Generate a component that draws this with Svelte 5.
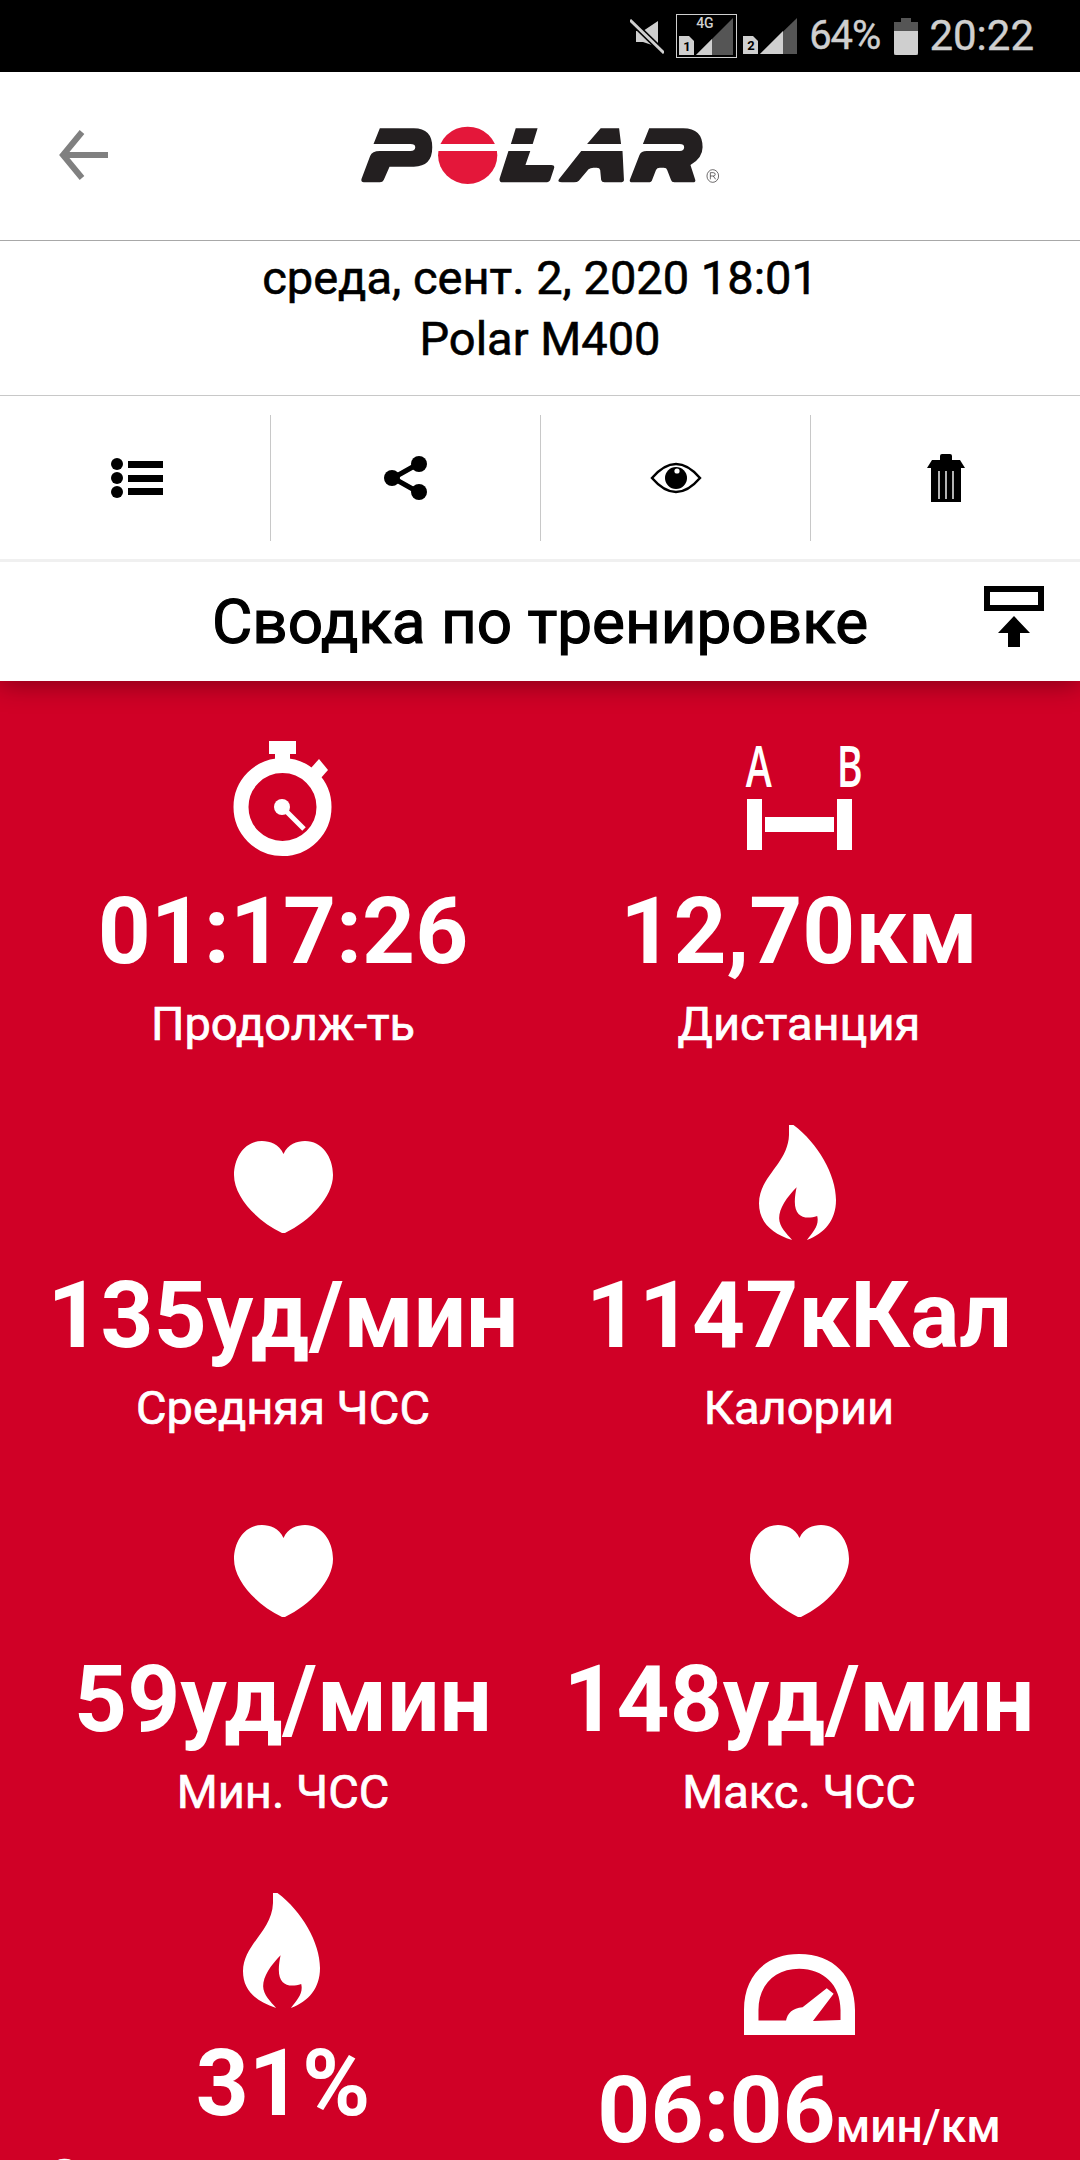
<script>
	const rows = [
		[
			{ icon: 'watch', value: '01:17:26', unit: '', label: 'Продолж-ть' },
			{ icon: 'dist', value: '12,70', unit: 'км', label: 'Дистанция' }
		],
		[
			{ icon: 'heart', value: '135', unit: 'уд/мин', label: 'Средняя ЧСС' },
			{ icon: 'flame', value: '1147', unit: 'кКал', label: 'Калории' }
		],
		[
			{ icon: 'heart', value: '59', unit: 'уд/мин', label: 'Мин. ЧСС' },
			{ icon: 'heart', value: '148', unit: 'уд/мин', label: 'Макс. ЧСС' }
		],
		[
			{ icon: 'flame', value: '31', unit: '%', label: 'Сжигание жира, ккал' },
			{ icon: 'speed', value: '06:06', unit: 'мин/км', small: true, label: 'Темп' }
		]
	];
</script>

<div class="screen">
	<div class="status">
		<svg class="st-mute" viewBox="0 0 34 35" width="34" height="35">
			<path d="M6 12h7L28 2v26L13 23H6z" fill="#cfcfcf" />
			<path d="M0 1l34 33" stroke="#000" stroke-width="6" />
			<path d="M0 1l34 33" stroke="#cfcfcf" stroke-width="3" />
		</svg>
		<div class="sim-box">
			<span class="net">4G</span>
			<svg viewBox="0 0 59 42" width="59" height="42">
				<path d="M2 21h10l5 5v14H2z" fill="#cfcfcf" />
				<path d="M19 40L56 3v37z" fill="#555" />
				<path d="M19 40l16-16v16z" fill="#cfcfcf" />
			</svg>
			<span class="sim-num one">1</span>
		</div>
		<div class="sim-two">
			<svg viewBox="0 0 54 37" width="54" height="37">
				<path d="M0 18h10l5 5v13H0z" fill="#cfcfcf" />
				<path d="M17 36L54 0v36z" fill="#555" />
				<path d="M17 36l23-23v23z" fill="#cfcfcf" />
			</svg>
			<span class="sim-num two">2</span>
		</div>
		<span class="pct">64%</span>
		<svg class="st-batt" viewBox="0 0 24 37" width="24" height="37">
			<path d="M7 0h10v4h7v33H0V4h7z" fill="#555" />
			<path d="M0 13h24v22a2 2 0 0 1-2 2H2a2 2 0 0 1-2-2z" fill="#cfcfcf" />
		</svg>
		<span class="clock">20:22</span>
	</div>

	<header class="topbar">
		<svg class="back" viewBox="0 0 52 52" width="52" height="52">
			<path d="M50 26H6M24 3L5 26l19 23" fill="none" stroke="#808080" stroke-width="6" />
		</svg>
		<svg class="logo" viewBox="740 165 750 180" width="364" height="60" preserveAspectRatio="none">
			<g fill="#231f20">
				<path d="M785 175H855Q893 175 893 232Q893 290 855 290H805L793 330Q791 337 785 337H752Q746 337 747 328L765 258Q769 243 785 243H848Q858 243 858 232Q858 222 848 222H772Z" />
				<path d="M1065 175H1110L1100 222H1055ZM1050 243H1095L1085 285H1138Q1146 285 1144 295L1136 330Q1134 337 1126 337H1038Q1030 337 1032 325Z" />
				<path d="M1240 175H1278L1282 222H1212ZM1200 243H1285L1288 330Q1288 337 1280 337H1248Q1242 337 1241 330L1239 300Q1238 293 1232 293H1225Q1219 293 1215 298L1195 332Q1192 337 1185 337H1160Q1150 337 1154 328Z" />
				<path d="M1340 175H1410Q1450 175 1450 232Q1450 265 1425 285L1435 330Q1436 337 1430 337H1392Q1386 337 1385 330L1377 300Q1376 293 1370 293H1362Q1356 293 1354 300L1346 330Q1345 337 1338 337H1305Q1299 337 1300 330L1320 255Q1323 243 1335 243H1403Q1412 243 1412 232Q1412 222 1403 222H1327Z" />
			</g>
			<ellipse cx="966" cy="256" rx="61" ry="86" fill="#e4173a" />
			<rect x="900" y="222" width="135" height="21" fill="#fff" />
			<ellipse cx="1471" cy="318" rx="12" ry="19" fill="none" stroke="#231f20" stroke-width="1.6" />
			<path d="M1466 328V308H1472Q1476 308 1476 313Q1476 318 1472 318H1466M1472 318L1477 328" fill="none" stroke="#231f20" stroke-width="1.6" />
		</svg>
	</header>

	<section class="when">
		<div>среда, сент. 2, 2020 18:01</div>
		<div>Polar M400</div>
	</section>

	<nav class="tools">
		<div class="tool">
			<svg class="list-icon" viewBox="0 0 52 40" width="52" height="40">
				<circle cx="6" cy="6" r="6" /><circle cx="6" cy="20" r="6" /><circle cx="6" cy="34" r="6" />
				<rect x="17" y="3" width="35" height="7" /><rect x="17" y="17" width="35" height="7" /><rect x="17" y="30" width="35" height="7" />
			</svg>
		</div>
		<div class="tool">
			<svg viewBox="0 0 44 44" width="44" height="44">
				<path d="M34 8L9 22l25 14" fill="none" stroke="#000" stroke-width="5" />
				<circle cx="35" cy="8" r="8" /><circle cx="8" cy="22" r="8" /><circle cx="35" cy="36" r="8" />
			</svg>
		</div>
		<div class="tool">
			<svg viewBox="0 0 52 32" width="52" height="32">
				<path d="M2 16Q14 2 26 2T50 16Q38 30 26 30T2 16Z" fill="none" stroke="#000" stroke-width="2.5" />
				<circle cx="26" cy="16" r="11" />
				<circle cx="27" cy="9" r="2.6" fill="#fff" />
			</svg>
		</div>
		<div class="tool">
			<svg viewBox="0 0 38 48" width="38" height="48">
				<path d="M13 6V2q0-2 2-2h8q2 0 2 2v4h8l5 8H0l5-8z" />
				<path d="M4 14h30v34H4z" />
				<path d="M12 17v28M19 17v28M26 17v28" stroke="#fff" stroke-width="1.4" />
			</svg>
		</div>
	</nav>

	<div class="title-bar">
		<h1>Сводка по тренировке</h1>
		<svg class="pin" viewBox="0 0 60 62" width="60" height="62">
			<rect x="3" y="3" width="54" height="19" fill="none" stroke="#000" stroke-width="6" />
			<path d="M30 30L46 47H36V61H24V47H14z" />
		</svg>
	</div>

	<main class="stats">
		{#each rows as row}
			{#each row as s}
				<div class="stat" class:low={s.icon === 'speed'}>
					<div class="icon">
						{#if s.icon === 'watch'}
							<svg viewBox="0 0 100 115" width="100" height="115">
								<rect x="36" y="0" width="27" height="13" fill="#fff" />
								<rect x="42" y="12" width="15" height="9" fill="#fff" />
								<path d="M78 27l8-9 9 11-8 9z" fill="#fff" />
								<circle cx="49.5" cy="66" r="41.5" fill="none" stroke="#fff" stroke-width="15" />
								<circle cx="49" cy="66" r="8" fill="#fff" />
								<path d="M49 66l22 22" stroke="#fff" stroke-width="5" />
							</svg>
						{:else if s.icon === 'dist'}
							<div class="dist">
								<div class="ab"><span>A</span><span>B</span></div>
								<svg viewBox="0 0 105 51" width="105" height="51">
									<rect x="0" y="0" width="15" height="51" fill="#fff" />
									<rect x="90" y="0" width="15" height="51" fill="#fff" />
									<rect x="18" y="18" width="69" height="15" fill="#fff" />
								</svg>
							</div>
						{:else if s.icon === 'heart'}
							<svg viewBox="0 -16 99 115" width="99" height="115">
								<path d="M49.5 13C54 3 63 0 71 0C88 0 99 16 99 34C99 56 76 80 51 92H48C23 80 0 56 0 34C0 16 11 0 28 0C36 0 45 3 49.5 13Z" fill="#fff" />
							</svg>
						{:else if s.icon === 'flame'}
							<svg class="flame" viewBox="1253 45 172 345" width="77" height="115" preserveAspectRatio="none">
								<path d="M1320 45H1330C1385 100 1425 195 1425 270C1425 330 1400 370 1360 390C1375 365 1388 345 1383 318C1355 330 1333 320 1333 275C1333 260 1335 245 1337 232C1315 262 1298 295 1298 325C1298 350 1315 372 1327 390C1280 370 1253 335 1253 280C1253 200 1318 160 1320 75Z" fill="#fff" />
							</svg>
						{:else}
							<svg viewBox="1080 283 161 242" width="111" height="81" preserveAspectRatio="none">
								<path fill-rule="evenodd" d="M1080 525V450C1080 350 1110 283 1160 283C1210 283 1241 350 1241 450V525ZM1101 482H1141C1143 460 1150 445 1165 442L1200 385L1210 402L1180 483L1220 480V450C1220 375 1195 327 1160 327C1125 327 1101 375 1101 450Z" fill="#fff" />
							</svg>
						{/if}
					</div>
					<div class="value">{s.value}<span class:small={s.small}>{s.unit}</span></div>
					<div class="label">{s.label}</div>
				</div>
			{/each}
		{/each}
	</main>
</div>

<style>
	:global(body) {
		margin: 0;
		background: #d00026;
	}

	.screen {
		width: 1080px;
		height: 2160px;
		overflow: hidden;
		font-family: Roboto, 'Liberation Sans', sans-serif;
		display: flex;
		flex-direction: column;
	}

	.status {
		flex: none;
		height: 72px;
		background: #000;
		display: flex;
		align-items: center;
		justify-content: flex-end;
		padding-right: 46px;
		box-sizing: border-box;
		color: #cfcfcf;
	}

	.sim-box {
		position: relative;
		width: 59px;
		height: 42px;
		border: 1px solid #cfcfcf;
		margin: 0 6px 0 12px;
	}

	.sim-box svg,
	.sim-two svg {
		display: block;
	}

	.sim-two {
		position: relative;
		width: 54px;
		height: 37px;
		margin-right: 12px;
	}

	.net {
		position: absolute;
		left: 19px;
		top: 2px;
		font-size: 14px;
		line-height: 12px;
		font-weight: 500;
	}

	.sim-num {
		position: absolute;
		font-size: 13px;
		font-weight: 700;
		line-height: 14px;
		color: #000;
	}

	.sim-num.one {
		left: 6px;
		top: 25px;
	}

	.sim-num.two {
		left: 4px;
		top: 21px;
	}

	.pct {
		font-size: 40px;
		line-height: 44px;
		letter-spacing: -1px;
		-webkit-text-stroke: 0.4px #cfcfcf;
	}

	.st-batt {
		margin: 0 11px 0 14px;
	}

	.clock {
		font-size: 42px;
		line-height: 44px;
		-webkit-text-stroke: 0.4px #cfcfcf;
	}

	.topbar {
		flex: none;
		height: 168px;
		background: #fff;
		border-bottom: 1px solid #a8a8a8;
		display: flex;
		align-items: center;
		justify-content: center;
		position: relative;
	}

	.back {
		position: absolute;
		left: 58px;
		top: 57px;
	}

	.logo {
		margin-bottom: 2px;
	}

	.when {
		flex: none;
		height: 155px;
		background: #fff;
		border-bottom: 1px solid #c8c8c8;
		text-align: center;
		font-size: 47px;
		line-height: 61px;
		color: #000;
		padding-top: 6px;
		box-sizing: border-box;
		-webkit-text-stroke: 0.6px #000;
	}

	.tools {
		flex: none;
		height: 163px;
		background: #fff;
		border-bottom: 3px solid #f0f0f0;
		display: grid;
		grid-template-columns: 271px 270px 270px 269px;
		align-items: center;
	}

	.tool {
		height: 126px;
		display: flex;
		align-items: center;
		justify-content: center;
		border-right: 1px solid #c8c8c8;
	}

	.tool:last-child {
		border-right: 0;
	}

	.tool svg {
		display: block;
	}

	.list-icon {
		margin-left: 3px;
	}

	.title-bar {
		flex: none;
		height: 119px;
		background: #fff;
		display: flex;
		align-items: center;
		justify-content: center;
		position: relative;
		z-index: 1;
		box-shadow: 0 4px 24px rgba(0, 0, 0, 0.35);
		/* shadow only falls on the red panel, not the toolbar above */
		clip-path: inset(0 0 -48px 0);
	}

	h1 {
		margin: 0;
		font-size: 62px;
		font-weight: 400;
		color: #000;
		-webkit-text-stroke: 1.2px #000;
	}

	.pin {
		position: absolute;
		left: 984px;
		top: 24px;
	}

	.stats {
		flex: 1;
		min-height: 0;
		background: #d00026;
		display: grid;
		grid-template-columns: 516px 516px;
		grid-auto-rows: 384px;
		padding: 60px 0 0 25px;
	}

	.stat {
		display: flex;
		flex-direction: column;
		align-items: center;
		color: #fff;
		white-space: nowrap;
	}

	.stat.low {
		padding-top: 27px;
	}

	.icon {
		height: 115px;
		display: flex;
		align-items: center;
		justify-content: center;
	}

	.icon svg {
		display: block;
	}

	.icon .flame {
		margin-left: -3px;
	}

	.low .icon {
		align-items: flex-end;
	}

	.dist {
		width: 105px;
		display: flex;
		flex-direction: column;
		gap: 9px;
	}

	.ab {
		display: flex;
		justify-content: space-between;
		margin: 0 -5px;
		font-size: 58px;
		font-weight: 600;
		line-height: 42px;
		height: 42px;
		font-family: 'Open Sans', sans-serif;
	}

	.ab span {
		display: block;
		transform: translateY(-4px) scaleX(0.68);
		width: 24px;
		text-align: center;
	}

	.value {
		font-size: 92.5px;
		font-weight: 700;
		line-height: 100px;
		margin-top: 26px;
	}

	.value .small {
		font-size: 46px;
		font-weight: 500;
	}

	.label {
		font-size: 47px;
		font-weight: 400;
		line-height: 54px;
		margin-top: 15px;
		-webkit-text-stroke: 0.7px #fff;
	}
</style>
